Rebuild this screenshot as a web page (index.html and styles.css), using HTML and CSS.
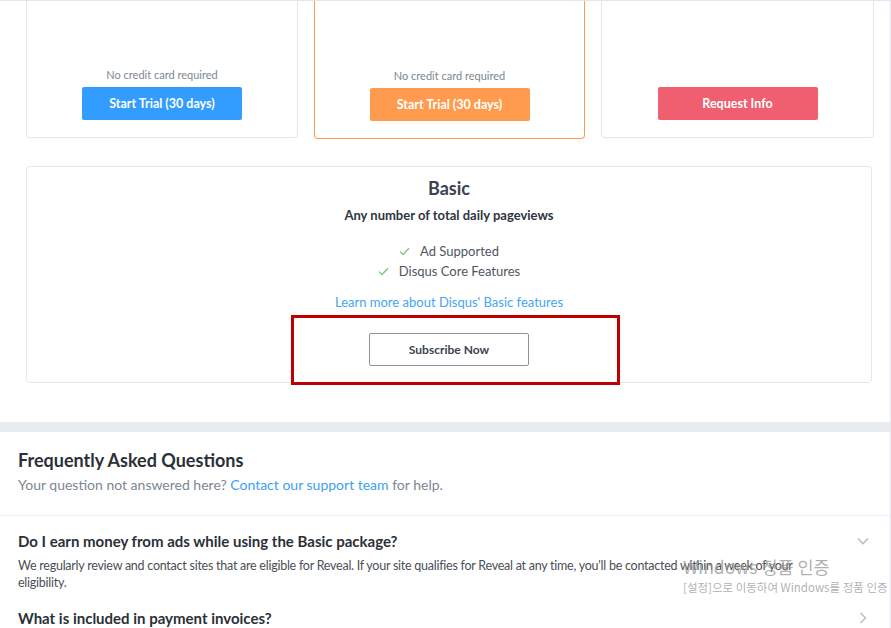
FILE: index.html
```html
<!DOCTYPE html>
<html lang="en">
<head>
<meta charset="utf-8">
<title>Disqus Plans</title>
<link rel="stylesheet" href="styles.css">
</head>
<body>
<div class="page">
  <div class="topline"></div>
  <main class="plans">
    <div class="tiers">
      <div class="card tier">
        <p class="note">No credit card required</p>
        <a class="btn btn-blue" href="#">Start Trial (30 days)</a>
      </div>
      <div class="card tier tier-featured">
        <p class="note">No credit card required</p>
        <a class="btn btn-orange" href="#">Start Trial (30 days)</a>
      </div>
      <div class="card tier">
        <a class="btn btn-red" href="#">Request Info</a>
      </div>
    </div>
    <div class="card basic">
      <h2 class="basic-title">Basic</h2>
      <p class="basic-sub">Any number of total daily pageviews</p>
      <ul class="features">
        <li><svg class="check" width="11" height="9" viewBox="0 0 11 9"><path d="M1 4.6 L4 7.5 L10 1.2" fill="none" stroke="#7cc47f" stroke-width="1.3"/></svg>Ad Supported</li>
        <li><svg class="check" width="11" height="9" viewBox="0 0 11 9"><path d="M1 4.6 L4 7.5 L10 1.2" fill="none" stroke="#7cc47f" stroke-width="1.3"/></svg>Disqus Core Features</li>
      </ul>
      <a class="learn" href="#">Learn more about Disqus' Basic features</a>
      <a class="btn btn-outline" href="#">Subscribe Now</a>
    </div>
  </main>
  <div class="band"></div>
  <section class="faq">
    <div class="faq-head">
      <h2 class="faq-title">Frequently Asked Questions</h2>
      <p class="faq-sub">Your question not answered here? <a href="#">Contact our support team</a> for help.</p>
    </div>
    <div class="faq-item open">
      <div class="faq-q">
        <h3>Do I earn money from ads while using the Basic package?</h3>
        <svg class="chev" width="14" height="14" viewBox="0 0 14 14"><path d="M2 4.5 L7 9.5 L12 4.5" fill="none" stroke="#b8c0cb" stroke-width="1.6"/></svg>
      </div>
      <p class="faq-a">We regularly review and contact sites that are eligible for Reveal. If your site qualifies for Reveal at any time, you'll be contacted within a week of your eligibility.</p>
    </div>
    <div class="faq-item">
      <div class="faq-q">
        <h3>What is included in payment invoices?</h3>
        <svg class="chev" width="14" height="14" viewBox="0 0 14 14"><path d="M4.5 2 L9.5 7 L4.5 12" fill="none" stroke="#b8c0cb" stroke-width="1.6"/></svg>
      </div>
    </div>
  </section>
  <div class="annotation"></div>
  <div class="watermark">
    <div class="wm-title">Windows 정품 인증</div>
    <div class="wm-sub">[설정]으로 이동하여 Windows를 정품 인증</div>
  </div>
</div>
</body>
</html>
```

FILE: styles.css
```css
* { box-sizing: border-box; }
html, body { margin: 0; padding: 0; background: #fff; }
body {
  font-family: Lato, "Noto Sans CJK KR", sans-serif;
  color: #3b4350;
  overflow: hidden;
}
.page {
  position: relative;
  width: 891px;
  height: 628px;
  border-right: 1px solid #e6e8ec;
  overflow: hidden;
}
.topline { height: 1px; background: #e3e6ea; }
a { text-decoration: none; }
p { margin: 0; }

.plans { padding: 0 18px 0 26px; }
.tiers {
  display: grid;
  grid-template-columns: 272px 271px 273px;
  column-gap: 16px;
  align-items: start;
}
.card {
  background: #fff;
  border: 1px solid #e4e7ec;
  border-radius: 4px;
}
.tier {
  border-top: none;
  border-top-left-radius: 0;
  border-top-right-radius: 0;
  height: 137px;
  display: flex;
  flex-direction: column;
  align-items: center;
  justify-content: flex-end;
  padding-bottom: 17px;
}
.tier-featured {
  border-color: #ff9b50;
  height: 138px;
}
.note {
  font-size: 11px;
  line-height: 13px;
  color: #7d8791;
  margin-bottom: 6px;
}
.btn {
  display: flex;
  align-items: center;
  justify-content: center;
  width: 160px;
  height: 33px;
  border-radius: 2px;
  color: #fff;
  font-size: 12.5px;
  font-weight: 700;
}
.btn-blue { background: #339dff; }
.btn-orange { background: #ff9b4e; }
.btn-red { background: #f05f70; }

.basic {
  margin-top: 27px;
  height: 217px;
  display: flex;
  flex-direction: column;
  align-items: center;
  padding-top: 9px;
}
.basic-title {
  margin: 0;
  font-size: 18px;
  line-height: 24px;
  font-weight: 700;
  color: #3b4350;
}
.basic-sub {
  margin-top: 6px;
  font-size: 13px;
  line-height: 18px;
  font-weight: 700;
  color: #2f3540;
}
.features {
  list-style: none;
  margin: 17px 0 0;
  padding: 0;
  display: flex;
  flex-direction: column;
  align-items: center;
}
.features li {
  display: flex;
  align-items: center;
  height: 20px;
  font-size: 13px;
  line-height: 20px;
  color: #4f5661;
}
.check {
  margin-right: 10px;
}
.learn {
  margin-top: 12px;
  font-size: 13px;
  line-height: 18px;
  color: #47a4f0;
}
.btn-outline {
  margin-top: 22px;
  background: #fff;
  border: 1px solid #8d949c;
  color: #3b4350;
  font-weight: 700;
  font-size: 12px;
}

.band {
  margin-top: 39px;
  height: 10px;
  background: #e8ebef;
}
.faq-head {
  padding: 16px 18px 20px;
  border-bottom: 1px solid #eceef1;
}
.faq-title {
  margin: 0;
  font-size: 18px;
  line-height: 24px;
  font-weight: 700;
  color: #2b3038;
}
.faq-sub {
  margin-top: 3px;
  font-size: 14px;
  line-height: 20px;
  color: #7c8792;
}
.faq-sub a { color: #3da0f5; }
.faq-item { padding: 15px 20px 0 18px; }
.faq-item + .faq-item { padding-top: 17px; }
.faq-q {
  display: flex;
  align-items: center;
  justify-content: space-between;
}
.faq-q h3 {
  margin: 0;
  font-size: 15px;
  line-height: 20px;
  font-weight: 700;
  color: #2b3038;
}
.faq-a {
  margin-top: 6px;
  width: 800px;
  font-size: 12.5px;
  letter-spacing: -0.25px;
  line-height: 17px;
  color: #4a4f57;
}

.annotation {
  position: absolute;
  left: 291px;
  top: 315px;
  width: 329px;
  height: 70px;
  border: 3px solid #c00000;
}
.watermark {
  position: absolute;
  left: 683px;
  top: 556px;
  white-space: nowrap;
  color: rgba(150, 150, 150, 0.75);
  font-family: "Noto Sans CJK KR", sans-serif;
}
.wm-title { font-size: 17.5px; line-height: 22px; }
.wm-sub { font-size: 11.5px; line-height: 18px; }
```
